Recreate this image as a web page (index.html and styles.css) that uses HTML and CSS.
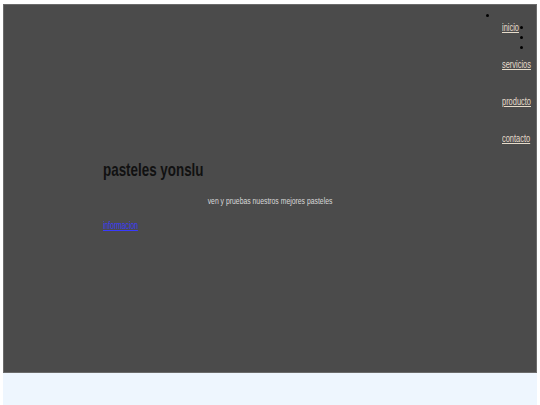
FILE: index.html
```html
<!DOCTYPE html>
<html lang="es">
<head>
<meta charset="utf-8">
<title>pasteles yonslu</title>
<link rel="stylesheet" href="styles.css">
</head>
<body>
<header class="hero">
  <nav class="menu">
    <span class="dot dot-a"></span>
    <span class="dot dot-b"></span>
    <span class="dot dot-c"></span>
    <span class="dot dot-d"></span>
    <a href="#"><span class="narrow">inicio</span></a>
    <a href="#"><span class="narrow">servicios</span></a>
    <a href="#"><span class="narrow">producto</span></a>
    <a href="#"><span class="narrow">contacto</span></a>
  </nav>
  <div class="intro">
    <h1><span class="narrow">pasteles yonslu</span></h1>
    <p class="tagline"><span class="narrow mid">ven y pruebas nuestros mejores pasteles</span></p>
    <a class="info" href="#"><span class="narrow">informacion</span></a>
  </div>
</header>
<footer class="foot"></footer>
</body>
</html>
```

FILE: styles.css
```css
html, body {
  background: #ffffff;
}
body {
  margin: 4px 3px 0 3px;
  font-family: "Liberation Sans", Arial, sans-serif;
}
.narrow {
  display: inline-block;
  transform: scaleX(0.72);
  transform-origin: left center;
  white-space: nowrap;
}
a .narrow {
  text-decoration: underline;
}
.menu .narrow {
  transform: scaleX(0.745);
}
h1 .narrow {
  transform: scaleX(0.705);
}
.narrow.mid {
  transform: scaleX(0.76);
  transform-origin: center center;
}
.info .narrow {
  transform: scaleX(0.675);
}
.hero {
  height: 367px;
  background: #4b4b4b;
  border: 1px solid #6b6b6b;
  box-sizing: content-box;
}
.menu {
  float: right;
  position: relative;
  width: 34px;
  padding-top: 17px;
  display: flex;
  flex-direction: column;
  gap: 26px;
}
.menu a {
  display: block;
  color: #e6dccb;
  font-size: 10px;
  line-height: 11px;
}
.dot {
  position: absolute;
  width: 3px;
  height: 3px;
  background: #000;
  border-radius: 50%;
}
.dot-a { left: -16px; top: 9px; }
.dot-b { left: 18px; top: 21px; }
.dot-c { left: 18px; top: 31px; }
.dot-d { left: 18px; top: 41px; }
.intro {
  padding: 154px 0 0 99px;
}
h1 {
  margin: 0;
  font-size: 19px;
  line-height: 22px;
  color: #111111;
  font-weight: bold;
}
.tagline {
  margin: 15px 0 0 -99px;
  text-align: center;
  font-size: 9px;
  line-height: 11px;
  color: #d9d9d9;
}
.info {
  display: inline-block;
  margin-top: 13px;
  font-size: 10px;
  line-height: 11px;
  color: #3a3aff;
}
.foot {
  height: 32px;
  background: #eef6fe;
}
```
